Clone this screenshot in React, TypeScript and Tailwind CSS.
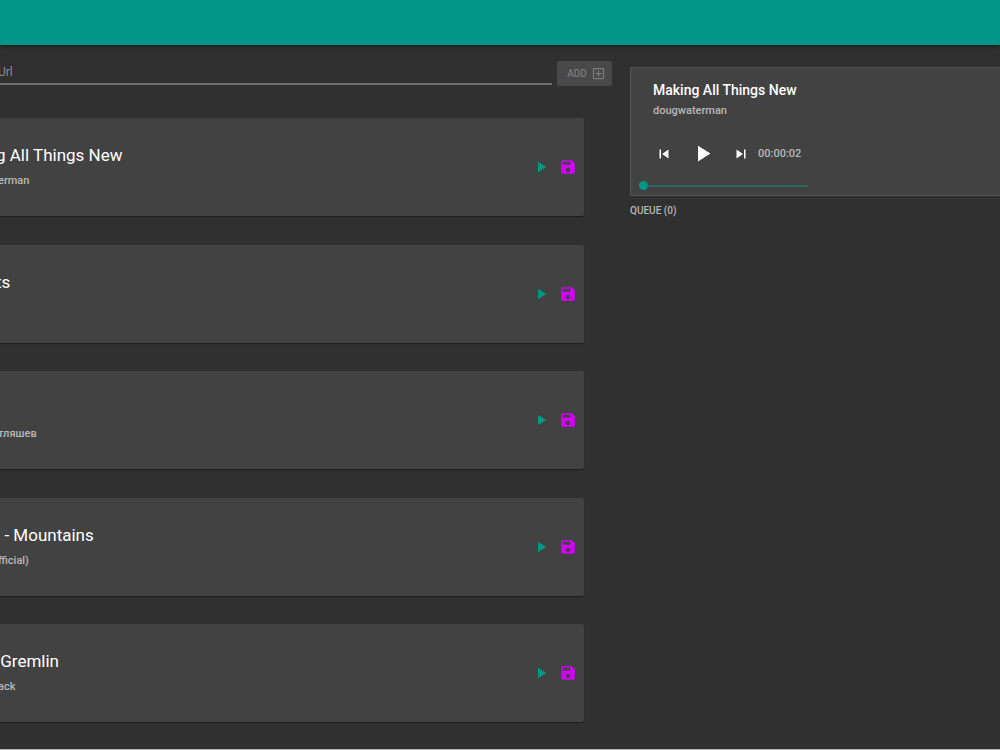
import React, { useState } from 'react';

interface Track {
  id: number;
  title: string;
  artist: string;
}

const TRACKS: Track[] = [
  { id: 1, title: 'g All Things New', artist: 'erman' },
  { id: 2, title: 'ts', artist: '' },
  { id: 3, title: '', artist: 'тляшев' },
  { id: 4, title: '  - Mountains', artist: 'fficial)' },
  { id: 5, title: ' Gremlin', artist: 'ack' },
];

const ICONS = {
  play: 'M8 5v14l11-7z',
  save: 'M17 3H5c-1.11 0-2 .9-2 2v14c0 1.1.89 2 2 2h14c1.1 0 2-.9 2-2V7l-4-4zm-5 16c-1.66 0-3-1.34-3-3s1.34-3 3-3 3 1.34 3 3-1.34 3-3 3zm3-10H5V5h10v4z',
  previous: 'M6 6h2v12H6zm3.5 6l8.5 6V6z',
  next: 'M6 18l8.5-6L6 6v12zM16 6v12h2V6h-2z',
  addBox: 'M19 3H5c-1.11 0-2 .9-2 2v14c0 1.1.89 2 2 2h14c1.1 0 2-.9 2-2V5c0-1.1-.9-2-2-2zm0 16H5V5h14v14zm-8-2h2v-4h4v-2h-4V7h-2v4H7v2h4z',
};

const Icon: React.FC<{ name: keyof typeof ICONS; size?: number }> = ({ name, size = 18 }) => (
  <svg width={size} height={size} viewBox="0 0 24 24" fill="currentColor" aria-hidden="true">
    <path d={ICONS[name]} />
  </svg>
);

const AddTrack: React.FC = () => {
  const [url, setUrl] = useState('');

  return (
    <form className="flex items-start gap-[5px]" onSubmit={e => e.preventDefault()}>
      <input
        type="text"
        aria-label="Url"
        placeholder="Url"
        value={url}
        onChange={e => setUrl(e.target.value)}
        className="-ml-0.5 h-6 min-w-0 flex-1 border-b-2 border-[#6e6e6e] bg-transparent text-xs text-white outline-none placeholder:text-[#8c8c8c]"
      />
      <button
        type="submit"
        disabled={!url}
        className="flex h-[25px] w-[55px] items-center justify-center gap-1 rounded-xs bg-[#494949] pl-1 text-[10px] font-medium text-[#7b7b7b]"
      >
        ADD <Icon name="addBox" size={15} />
      </button>
    </form>
  );
};

const TrackCard: React.FC<{ track: Track }> = ({ track }) => (
  <li className="flex h-[98px] items-center justify-between rounded-r-xs bg-[#424242] pr-[7px] shadow-[0_1px_1px_rgba(0,0,0,0.4)]">
    <div>
      <h2 className="-ml-1 h-7 whitespace-pre text-[17px] leading-[26px] text-white">{track.title}</h2>
      <p className="-ml-0.5 h-[22px] text-[11px] leading-[22px] font-medium text-[#b8b8b8]">{track.artist}</p>
    </div>
    <div className="flex gap-[9px]">
      <button type="button" aria-label="Play" className="text-[#009688]"><Icon name="play" /></button>
      <button type="button" aria-label="Save" className="text-[#d500f9]"><Icon name="save" /></button>
    </div>
  </li>
);

const Player: React.FC = () => {
  const [position, setPosition] = useState(0);

  return (
    <section className="rounded-l-xs border border-r-0 border-[#555555] bg-[#424242] pt-3 pb-[3px]">
      <div className="pl-[22px]">
        <h2 className="text-sm leading-5 font-medium text-white">Making All Things New</h2>
        <p className="text-[11px] leading-[22px] font-medium text-[#b8b8b8]">dougwaterman</p>
      </div>
      <div className="mt-[18px] flex items-center pl-6 text-white">
        <button type="button" aria-label="Previous"><Icon name="previous" /></button>
        <button type="button" aria-label="Play" className="mx-4"><Icon name="play" size={27} /></button>
        <button type="button" aria-label="Next"><Icon name="next" /></button>
        <span className="ml-2 text-[11px] leading-[27px] font-medium text-[#b8b8b8]">00:00:02</span>
      </div>
      <input
        type="range"
        aria-label="Position"
        min={0}
        max={100}
        value={position}
        onChange={e => setPosition(Number(e.target.value))}
        className="mt-[13px] ml-2 block h-3 w-[169px] appearance-none bg-transparent [&::-webkit-slider-runnable-track]:h-0.5 [&::-webkit-slider-runnable-track]:bg-[#2a665f] [&::-webkit-slider-thumb]:-mt-1 [&::-webkit-slider-thumb]:size-[9px] [&::-webkit-slider-thumb]:appearance-none [&::-webkit-slider-thumb]:rounded-full [&::-webkit-slider-thumb]:bg-[#009688]"
      />
    </section>
  );
};

const App: React.FC = () => {
  return (
    <div className="flex min-h-screen flex-col overflow-hidden border-b border-[#b5b5b5] bg-[#303030] font-['Roboto',sans-serif]">
      <header className="h-[45px] bg-[#009688] shadow-[0_1px_4px_rgba(0,0,0,0.5)]" />
      <main className="grid flex-1 grid-cols-[612fr_370fr] gap-[18px]">
        <div className="flex flex-col pt-4">
          <AddTrack />
          <ul className="mt-8 mr-7 mb-[27px] flex flex-1 flex-col justify-between gap-5">
            {TRACKS.map(track => <TrackCard key={track.id} track={track} />)}
          </ul>
        </div>
        <aside className="pt-[22px]">
          <Player />
          <h3 className="mt-[7px] text-[10px] leading-4 font-medium text-[#b8b8b8]">QUEUE (0)</h3>
        </aside>
      </main>
    </div>
  );
};

export default App;
